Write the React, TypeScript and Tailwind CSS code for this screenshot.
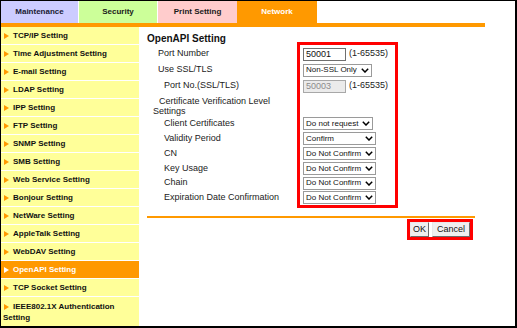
import React from "react"

const menu = [
  "TCP/IP Setting",
  "Time Adjustment Setting",
  "E-mail Setting",
  "LDAP Setting",
  "IPP Setting",
  "FTP Setting",
  "SNMP Setting",
  "SMB Setting",
  "Web Service Setting",
  "Bonjour Setting",
  "NetWare Setting",
  "AppleTalk Setting",
  "WebDAV Setting",
  "OpenAPI Setting",
  "TCP Socket Setting",
]

function Arrow({ white }: { white?: boolean }) {
  return (
    <svg width="5" height="6" viewBox="0 0 5 6" className="inline-block align-middle">
      <polygon points="0,0 5,3 0,6" fill={white ? "#ffffff" : "#ff9900"} />
    </svg>
  )
}

function Chevron() {
  return (
    <svg width="8" height="5" viewBox="0 0 8 5" className="shrink-0">
      <path d="M0.8 0.8 L4 4 L7.2 0.8" stroke="#000" strokeWidth="1.5" fill="none" />
    </svg>
  )
}

function Sel({ text, w }: { text: string; w: string }) {
  return (
    <div className={`${w} h-[13px] border border-[#9a9a9a] bg-white flex items-center justify-between pl-[2px] pr-[2px] text-[8px] leading-none text-[#111] whitespace-nowrap overflow-hidden`}>
      <span>{text}</span>
      <Chevron />
    </div>
  )
}

function Field({ value, disabled }: { value: string; disabled?: boolean }) {
  return (
    <div className="flex items-center gap-[3px]">
      <div
        className={
          disabled
            ? "w-[43px] h-[13px] border border-[#a8a8a8] bg-[#ebebeb] text-[#8c8c8c] text-[9px] leading-[11px] pl-[2px]"
            : "w-[43px] h-[13px] border border-[#6f6f6f] bg-white text-[#111] text-[9px] leading-[11px] pl-[2px]"
        }
      >
        {value}
      </div>
      <span className="text-[9px] text-[#222] whitespace-nowrap">(1-65535)</span>
    </div>
  )
}

function Label({ children, indent }: { children: React.ReactNode; indent: string }) {
  return <span className={`${indent} text-[9px] text-[#222] whitespace-nowrap`}>{children}</span>
}

export default function App() {
  return (
    <div className="w-[517px] h-[328px] overflow-hidden bg-white border-t border-l border-r-2 border-b-2 border-black font-['Liberation_Sans',Arial,sans-serif] flex flex-col">
      {/* tabs */}
      <div className="flex h-[22px] text-[8px] font-bold">
        <div className="w-[77px] bg-[#ccccff] text-[#1a1a33] flex items-center justify-center">Maintenance</div>
        <div className="w-[1px]" />
        <div className="w-[78px] bg-[#ccff99] text-[#1a1a1a] flex items-center justify-center">Security</div>
        <div className="w-[1px]" />
        <div className="w-[79px] bg-[#ffcccc] text-[#1a1a1a] flex items-center justify-center">Print Setting</div>
        <div className="w-[80px] bg-[#ff9900] text-white flex items-center justify-center">Network</div>
      </div>
      <div className="h-[4px] w-[484px] bg-[#ff9900]" />

      <div className="flex flex-1">
        {/* side menu */}
        <div className="w-[138px] flex flex-col text-[8px] font-bold">
          {menu.map((m) => {
            const active = m === "OpenAPI Setting"
            return (
              <div
                key={m}
                className={`h-[17px] mb-[1px] flex items-center gap-[4px] pl-[3px] ${active ? "bg-[#ff9900] text-white" : "bg-[#ffff99] text-[#111]"}`}
              >
                <Arrow white={active} />
                <span>{m}</span>
              </div>
            )
          })}
          <div className="flex-1 bg-[#ffff99] pl-[2px] pt-[4px] leading-[11px] text-[#111]">
            <span className="pl-[1px]"><Arrow /></span>
            <span className="ml-[4px]">IEEE802.1X Authentication Setting</span>
          </div>
        </div>

        {/* content */}
        <div className="ml-[8px] w-[328px] flex flex-col">
          <div className="h-[15px] pt-[5px] text-[10px] font-bold leading-[13px] text-[#111]">OpenAPI Setting</div>

          <div className="flex">
            <div className="w-[150px] pt-[4px] flex flex-col">
              <div className="h-[16px] flex items-center"><Label indent="pl-[11px]">Port Number</Label></div>
              <div className="h-[16px] flex items-center"><Label indent="pl-[11px]">Use SSL/TLS</Label></div>
              <div className="h-[16px] flex items-center"><Label indent="pl-[17px]">Port No.(SSL/TLS)</Label></div>
              <div className="h-[22px] flex flex-col justify-center pt-[1px] text-[9px] leading-[10px] text-[#222]">
                <span className="pl-[12px]">Certificate Verification Level</span>
                <span className="pl-[6px]">Settings</span>
              </div>
              <div className="h-[15px] flex items-center"><Label indent="pl-[17px]">Client Certificates</Label></div>
              <div className="h-[15px] flex items-center"><Label indent="pl-[17px]">Validity Period</Label></div>
              <div className="h-[15px] flex items-center"><Label indent="pl-[17px]">CN</Label></div>
              <div className="h-[15px] flex items-center"><Label indent="pl-[17px]">Key Usage</Label></div>
              <div className="h-[14px] flex items-center"><Label indent="pl-[17px]">Chain</Label></div>
              <div className="h-[15px] flex items-center"><Label indent="pl-[17px]">Expiration Date Confirmation</Label></div>
            </div>

            <div className="w-[101px] border-[3px] border-[#ff0000] pt-[1px] pl-[3px] flex flex-col">
              <div className="h-[16px] flex items-center"><Field value="50001" /></div>
              <div className="h-[16px] flex items-center"><Sel text="Non-SSL Only" w="w-[69px]" /></div>
              <div className="h-[16px] flex items-center"><Field value="50003" disabled /></div>
              <div className="h-[22px]" />
              <div className="h-[15px] flex items-center"><Sel text="Do not request" w="w-[70px]" /></div>
              <div className="h-[15px] flex items-center"><Sel text="Confirm" w="w-[73px]" /></div>
              <div className="h-[15px] flex items-center"><Sel text="Do Not Confirm" w="w-[73px]" /></div>
              <div className="h-[15px] flex items-center"><Sel text="Do Not Confirm" w="w-[73px]" /></div>
              <div className="h-[14px] flex items-center"><Sel text="Do Not Confirm" w="w-[73px]" /></div>
              <div className="h-[15px] flex items-center"><Sel text="Do Not Confirm" w="w-[73px]" /></div>
            </div>
          </div>

          <div className="mt-[8px] h-[2px] w-[328px] bg-[#ff9900]" />

          <div className="flex justify-end mt-[1px] mr-[2px]">
            <div className="border-[3px] border-[#ff0000] flex gap-[3px] p-0">
              <div className="w-[19px] h-[15px] bg-[#efefef] border border-t-[#e8e8e8] border-l-[#e8e8e8] border-r-[#6b6b6b] border-b-[#6b6b6b] text-[9px] text-[#111] flex items-center justify-center">OK</div>
              <div className="w-[38px] h-[15px] bg-[#efefef] border border-t-[#e8e8e8] border-l-[#e8e8e8] border-r-[#6b6b6b] border-b-[#6b6b6b] text-[9px] text-[#111] flex items-center justify-center">Cancel</div>
            </div>
          </div>
        </div>
      </div>
    </div>
  )
}
